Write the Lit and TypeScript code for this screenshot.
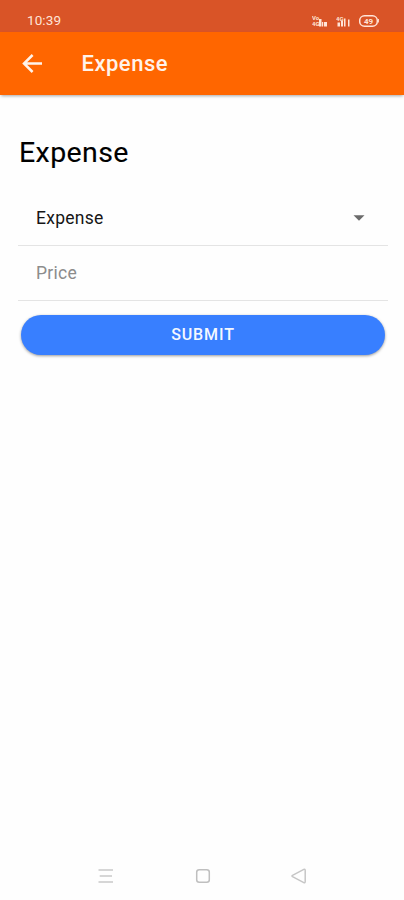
import { LitElement, html, css } from "lit";
import { customElement, property } from "lit/decorators.js";

@customElement("status-bar")
class StatusBar extends LitElement {
  static styles = css`
    :host {
      display: flex;
      align-items: center;
      justify-content: space-between;
      box-sizing: border-box;
      height: 32px;
      padding: 9px 25px 0 27px;
      background: #d95427;
      color: #ffe4d8;
      font: 400 13.5px/23px Roboto, sans-serif;
      letter-spacing: 0.1px;
    }
    .icons {
      display: flex;
      align-items: center;
      gap: 8px;
    }
    svg { display: block; }
    .label { font: 700 6px Roboto, sans-serif; letter-spacing: 0; }
    .charge { font: 700 8px Roboto, sans-serif; letter-spacing: 0; }
  `;

  render() {
    return html`
      <span>10:39</span>
      <div class="icons">
        <svg width="16" height="14" viewBox="0 0 16 14" fill="currentColor">
          <text class="label" x="0" y="6">Vo</text>
          <text class="label" x="0" y="12">4G</text>
          <path d="M7 5h2.500v7.500H7zM10 8h1v4.500h-1zM11.800 8h3.200v4.500h-3.200z" />
        </svg>
        <svg width="15" height="14" viewBox="0 0 15 14" fill="currentColor">
          <text class="label" x="0" y="6.500">4G</text>
          <path d="M1.500 8.500h2.500v4H1.500zM5 7h2v5.500H5zM8 4.500h1.500v8H8zM12 5.500h1.500v7H12z" />
        </svg>
        <svg width="20" height="14" viewBox="0 0 20 14" fill="none">
          <rect x="0.700" y="1.800" width="17.600" height="10.400" rx="4.800" stroke="currentColor" stroke-width="1.500" />
          <path d="M19.400 5v3.500" stroke="currentColor" />
          <text class="charge" x="5" y="10" fill="currentColor">49</text>
        </svg>
      </div>
    `;
  }
}

@customElement("app-toolbar")
class AppToolbar extends LitElement {
  @property() heading = "";

  static styles = css`
    :host {
      display: flex;
      align-items: center;
      box-sizing: border-box;
      height: 63px;
      padding: 0 20px 0 19.5px;
      gap: 38px;
      background: #ff6600;
      color: #fff3ea;
      box-shadow: 0 2px 3px -1px rgba(0, 0, 0, 0.35);
    }
    svg { display: block; }
    .title {
      font: 500 22px/30px Roboto, sans-serif;
      letter-spacing: 0.5px;
    }
  `;

  render() {
    return html`
      <svg width="24" height="24" viewBox="0 0 24 24" fill="none" stroke="currentColor" stroke-width="2.500">
        <path d="M22 11.500H4M12.600 3L4 11.500l8.600 8.500" />
      </svg>
      <span class="title">${this.heading}</span>
    `;
  }
}

@customElement("nav-bar")
class NavBar extends LitElement {
  static styles = css`
    :host {
      display: flex;
      align-items: center;
      justify-content: space-between;
      box-sizing: border-box;
      height: 48px;
      padding: 0 96px 0 97px;
    }
    svg { display: block; }
  `;

  render() {
    return html`
      <svg width="18" height="18" viewBox="0 0 18 18" stroke="#d6d6d6" stroke-width="1.800">
        <path d="M1.500 3h14.500M2.700 9h12.300M1.500 15h14.500" />
      </svg>
      <svg width="18" height="18" viewBox="0 0 18 18" fill="none" stroke="#bfbfbf" stroke-width="1.500">
        <rect x="2.700" y="2.700" width="12.600" height="12.600" rx="2.500" />
      </svg>
      <svg width="18" height="18" viewBox="0 0 18 18" fill="none" stroke="#c6c6c6" stroke-width="1.500" stroke-linejoin="round">
        <path d="M2.500 8.300L13.800 2.400q1.400-.5 1.400 1v11.200q0 1.500-1.400 1L2.500 9.700q-1-.7 0-1.400z" />
      </svg>
    `;
  }
}

@customElement("app-root")
class AppRoot extends LitElement {
  static styles = css`
    :host {
      display: flex;
      flex-direction: column;
      height: 900px;
      background: #fefefe;
      font-family: Roboto, sans-serif;
      color: #000;
    }
    main {
      flex: 1;
      display: flex;
      flex-direction: column;
      padding: 38px 16px 0 18px;
    }
    h1 {
      margin: 0 0 17px 1px;
      font: 400 28.500px/40px Roboto, sans-serif;
      letter-spacing: 0.4px;
      -webkit-text-stroke: 0.12px currentColor;
    }
    .field {
      display: flex;
      align-items: center;
      justify-content: space-between;
      box-sizing: border-box;
      height: 55px;
      padding: 0 23px 0 18px;
      border-bottom: 1.500px solid #e4e4e4;
      color: #161616;
      font-size: 17.500px;
      letter-spacing: 0.25px;
    }
    .select { height: 56px; }
    .placeholder { color: #8c8c8c; }
    .submit {
      height: 40px;
      margin: 14px 3px 0;
      padding: 0;
      border: 0;
      border-radius: 20px;
      background: #387fff;
      box-shadow: 0 1px 3px rgba(0, 0, 0, 0.4);
      color: #f4f8ff;
      font: 500 16px/40px Roboto, sans-serif;
      letter-spacing: 0.900px;
    }
  `;

  render() {
    return html`
      <status-bar></status-bar>
      <app-toolbar heading="Expense"></app-toolbar>
      <main>
        <h1>Expense</h1>
        <div class="field select">
          <span>Expense</span>
          <svg width="12" height="6" viewBox="0 0 12 6"><path d="M0.500 0.300h11L6 5.800z" fill="#6b6b6b" /></svg>
        </div>
        <div class="field"><span class="placeholder">Price</span></div>
        <button class="submit">SUBMIT</button>
      </main>
      <nav-bar></nav-bar>
    `;
  }
}
